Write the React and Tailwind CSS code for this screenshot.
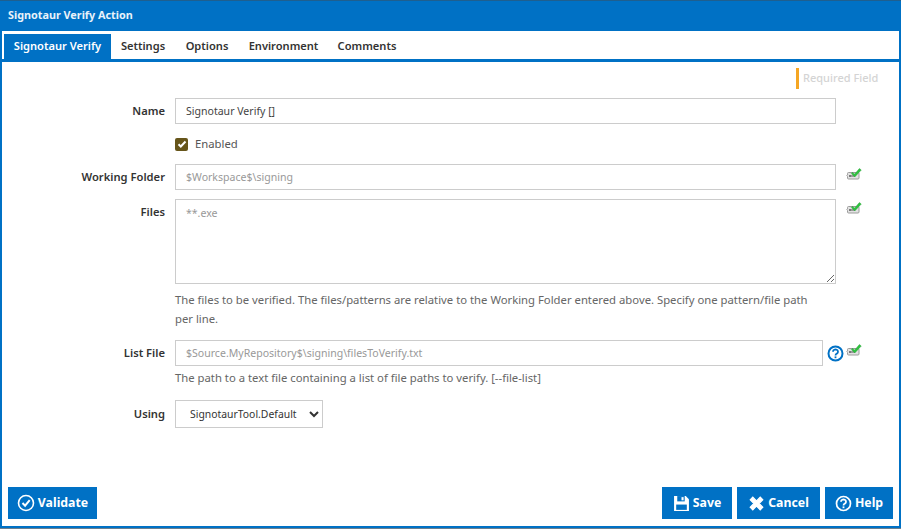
import React from "react";

const Expr = () => (
  <svg width="16" height="14" viewBox="0 0 16 14" className="shrink-0">
    <path d="M2.500 4.500h9.500a1 1 0 0 1 1 1v4.500a1 1 0 0 1-1 1H2.500a1 1 0 0 1-1-1V8.500L.8 7.700l.7-.8V5.500a1 1 0 0 1 1-1z" fill="#e2e2e2" stroke="#9c9c9c" />
    <path d="M3 8h6M4 7v2" stroke="#555" strokeWidth="1" fill="none" />
    <path d="M6.500 4.200l2 2L13.400.5l1.900 1.500-6.500 7-3.500-3.500z" fill="#2fc23f" stroke="#1f9a30" strokeWidth=".4" />
  </svg>
);

const Label = ({ children }) => (
  <div className="w-[163px] shrink-0 text-right text-[11.2px] font-semibold text-[#333]">{children}</div>
);

const inputCls = "h-[26px] border border-[#ccc] bg-white px-[10px] text-[10.55px] outline-none";

const Btn = ({ icon, children, w }) => (
  <button className={`flex h-[32px] items-center justify-center gap-[3px] bg-[#0071c5] text-[12.3px] font-bold text-white ${w}`}>
    {icon}
    {children}
  </button>
);

export default function App() {
  return (
    <div className="flex h-[529px] w-[901px] flex-col overflow-hidden border-t border-[#1f5f8f] bg-[#0071c5] font-['Noto_Sans',sans-serif]">
      <div className="flex h-[30px] shrink-0 items-center pb-[2px] pl-[8px] text-[10.8px] font-bold text-[#e8f2fa]">Signotaur Verify Action</div>
      <div className="mx-[2px] flex min-h-0 flex-1 flex-col bg-white">
        <div className="flex h-[31px] shrink-0 items-end border-b-[3px] border-[#0071c5] pl-[2px] text-[11.1px] font-semibold text-[#333]">
          <div className="flex h-[25px] w-[107px] items-center justify-center bg-[#0071c5] text-white">Signotaur Verify</div>
          <div className="flex h-[25px] w-[64px] items-center justify-center">Settings</div>
          <div className="flex h-[25px] w-[64px] items-center justify-center">Options</div>
          <div className="flex h-[25px] w-[89px] items-center justify-center">Environment</div>
          <div className="flex h-[25px] w-[78px] items-center justify-center">Comments</div>
        </div>
        <div className="flex flex-1 flex-col pb-[7px]">
          <div className="flex h-[36px] items-start justify-end pt-[6px] pr-[20px]">
            <div className="flex h-[21px] w-[83px] items-center whitespace-nowrap border-l-[3px] border-[#f5a623] pl-[4px] text-[11px] font-medium text-[#d4d4d4]">Required Field</div>
          </div>
          <div className="flex items-center">
            <Label>Name</Label>
            <input className={`${inputCls} ml-[10px] w-[661px] text-[#444]`} defaultValue="Signotaur Verify []" />
          </div>
          <div className="ml-[173px] mt-[11px] flex h-[18px] items-center gap-[7px] text-[11.3px] text-[#555]">
            <span className="flex h-[13px] w-[13px] items-center justify-center rounded-[2px] bg-[#66551a]">
              <svg width="10" height="10" viewBox="0 0 10 10"><path d="M1.500 5.200l2.300 2.300 4.700-5" stroke="#fff" strokeWidth="2" fill="none" /></svg>
            </span>
            Enabled
          </div>
          <div className="mt-[11px] flex items-center">
            <Label>Working Folder</Label>
            <input className={`${inputCls} ml-[10px] w-[661px] placeholder:text-[#999]`} placeholder="$Workspace$\signing" />
            <span className="ml-[10px] -mt-[4px]"><Expr /></span>
          </div>
          <div className="mt-[9px] flex items-start">
            <div className="pt-[5px]"><Label>Files</Label></div>
            <textarea className="ml-[10px] h-[85px] w-[661px] border border-[#ccc] px-[10px] py-[6px] text-[10.55px] outline-none placeholder:text-[#999]" placeholder="**.exe" />
            <span className="ml-[10px] mt-[3px]"><Expr /></span>
          </div>
          <div className="ml-[173px] mt-[6px] w-[650px] text-[11.3px] leading-[19px] text-[#666]">
            The files to be verified. The files/patterns are relative to the Working Folder entered above. Specify one pattern/file path per line.
          </div>
          <div className="mt-[12px] flex items-center">
            <Label>List File</Label>
            <input className={`${inputCls} ml-[10px] w-[648px] placeholder:text-[#999]`} placeholder="$Source.MyRepository$\signing\filesToVerify.txt" />
            <svg width="17" height="17" viewBox="0 0 17 17" className="ml-[4px]">
              <circle cx="8.500" cy="8.500" r="7" fill="none" stroke="#0071c5" strokeWidth="2" />
              <path d="M6 6.700a2.500 2.200 0 1 1 3.800 1.900c-.9.600-1.300 1-1.300 2" fill="none" stroke="#0071c5" strokeWidth="1.800" />
              <rect x="7.600" y="11.400" width="1.800" height="1.800" fill="#0071c5" />
            </svg>
            <span className="ml-[2px] -mt-[4px]"><Expr /></span>
          </div>
          <div className="ml-[173px] mt-[3px] text-[11.3px] leading-[17px] text-[#666]">The path to a text file containing a list of file paths to verify. [--file-list]</div>
          <div className="mt-[14px] flex items-center">
            <Label>Using</Label>
            <select className="ml-[10px] h-[28px] w-[148px] border border-[#ccc] bg-white pl-[10px] text-[10.4px] text-[#333] outline-none" defaultValue="d">
              <option value="d">SignotaurTool.Default</option>
            </select>
          </div>
          <div className="mt-auto flex items-center px-[6px]">
            <Btn w="w-[89px]" icon={
              <svg width="18" height="18" viewBox="0 0 18 18"><circle cx="9" cy="9" r="7.500" fill="none" stroke="#fff" strokeWidth="1.600" /><path d="M5.500 9l2.600 2.700 4.600-5.500" fill="none" stroke="#fff" strokeWidth="2" /></svg>
            }>Validate</Btn>
            <div className="ml-auto flex gap-[5px]">
              <Btn w="w-[70px]" icon={
                <svg width="17" height="17" viewBox="0 0 16 16"><path d="M1 1h11l3 3v11H1z" fill="#fff" /><rect x="4" y="1" width="7" height="5" fill="#0071c5" /><rect x="8" y="2" width="2" height="3" fill="#fff" /><rect x="3" y="9" width="10" height="5" fill="#0071c5" /></svg>
              }>Save</Btn>
              <Btn w="w-[83px]" icon={
                <svg width="17" height="17" viewBox="0 0 16 16"><path d="M2 4.500L4.500 2 8 5.500 11.500 2 14 4.500 10.500 8l3.500 3.500-2.500 2.500L8 10.500 4.500 14 2 11.500 5.500 8z" fill="#fff" stroke="#fff" /></svg>
              }>Cancel</Btn>
              <Btn w="w-[68px]" icon={
                <svg width="17" height="17" viewBox="0 0 17 17"><circle cx="8.500" cy="8.500" r="7" fill="none" stroke="#fff" strokeWidth="1.700" /><path d="M6 6.700a2.500 2.200 0 1 1 3.800 1.900c-.9.600-1.300 1-1.300 2" fill="none" stroke="#fff" strokeWidth="1.800" /><rect x="7.600" y="11.400" width="1.800" height="1.800" fill="#fff" /></svg>
              }>Help</Btn>
            </div>
          </div>
        </div>
      </div>
      <div className="h-[2px] shrink-0" />
      <div className="h-[1px] shrink-0 bg-[#6b7f8f]" />
    </div>
  );
}
